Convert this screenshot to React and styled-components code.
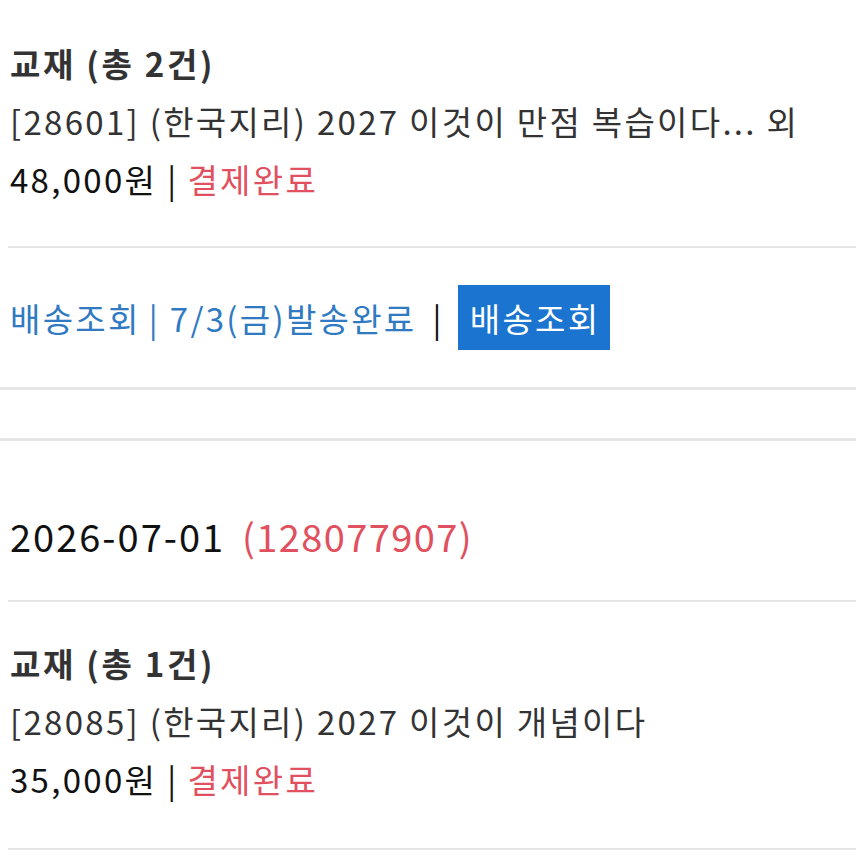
import React from 'react';
import styled, { createGlobalStyle } from 'styled-components';

const GlobalStyle = createGlobalStyle`
  html, body {
    margin: 0;
    padding: 0;
    background: #fff;
  }
  body {
    font-family: "Noto Sans CJK KR", "Noto Sans", sans-serif;
  }
`;

const Page = styled.div`
  width: 856px;
  overflow: hidden;
`;

const Block = styled.div`
  padding: ${(p) => p.$pad || '34px 0 38px 10px'};
`;

const Line = styled.div`
  font-size: ${(p) => p.$size || 33}px;
  line-height: 58px;
  color: ${(p) => p.$color || '#333'};
  font-weight: ${(p) => (p.$bold ? 700 : 400)};
  white-space: nowrap;
  letter-spacing: ${(p) => p.$ls || 2.3}px;
`;

const Red = styled.span`
  color: #e0505e;
  margin-left: ${(p) => p.$gap || 0}px;
`;

const OrderNo = styled(Red)`
  letter-spacing: 1.4px;
`;

const Bar = styled.span`
  margin: 0 9px 0 10px;
  color: #111;
`;

const Divider = styled.hr`
  margin: 0 0 0 ${(p) => (p.$inset ? '8px' : '0')};
  border: none;
  height: ${(p) => p.$h || 2}px;
  background: #e6e6e6;
`;

const ShipRow = styled.div`
  display: flex;
  align-items: center;
  padding: 37px 0 37px 10px;
  font-size: 33px;
  color: #2f7ac2;
  letter-spacing: 2.3px;
  white-space: nowrap;
`;

const Sep = styled.span`
  margin: ${(p) => (p.$dark ? '0 14px 0 16px' : '0 10px 0 8px')};
  color: ${(p) => (p.$dark ? '#111' : 'inherit')};
`;

const ShipButton = styled.button`
  height: 65px;
  padding: 0 10px 0 12px;
  border: none;
  background: #1b74d0;
  color: #fff;
  font-family: inherit;
  font-size: 33px;
  letter-spacing: 2.3px;
`;

const Gap = styled.div`
  height: 48px;
`;

function OrderItem({ title, name, price, pad }) {
  return (
    <Block $pad={pad}>
      <Line $bold $ls={2.7}>{title}</Line>
      <Line>{name}</Line>
      <Line $color="#111">
        {price}
        <Bar>|</Bar>
        <Red>결제완료</Red>
      </Line>
    </Block>
  );
}

export default function App() {
  return (
    <Page>
      <GlobalStyle />
      <OrderItem
        title="교재 (총 2건)"
        name="[28601] (한국지리) 2027 이것이 만점 복습이다... 외"
        price="48,000원"
      />
      <Divider $inset />
      <ShipRow>
        배송조회<Sep>|</Sep>7/3(금)발송완료<Sep $dark>|</Sep>
        <ShipButton>배송조회</ShipButton>
      </ShipRow>
      <Divider $h={3} />
      <Gap />
      <Divider $h={3} />
      <Block $pad="66px 0 35px 10px">
        <Line $color="#111" $size={38} $ls={2}>
          2026-07-01<OrderNo $gap={17}>(128077907)</OrderNo>
        </Line>
      </Block>
      <Divider $inset />
      <OrderItem
        pad="32px 0 40px 10px"
        title="교재 (총 1건)"
        name="[28085] (한국지리) 2027 이것이 개념이다"
        price="35,000원"
      />
      <Divider $inset />
    </Page>
  );
}
